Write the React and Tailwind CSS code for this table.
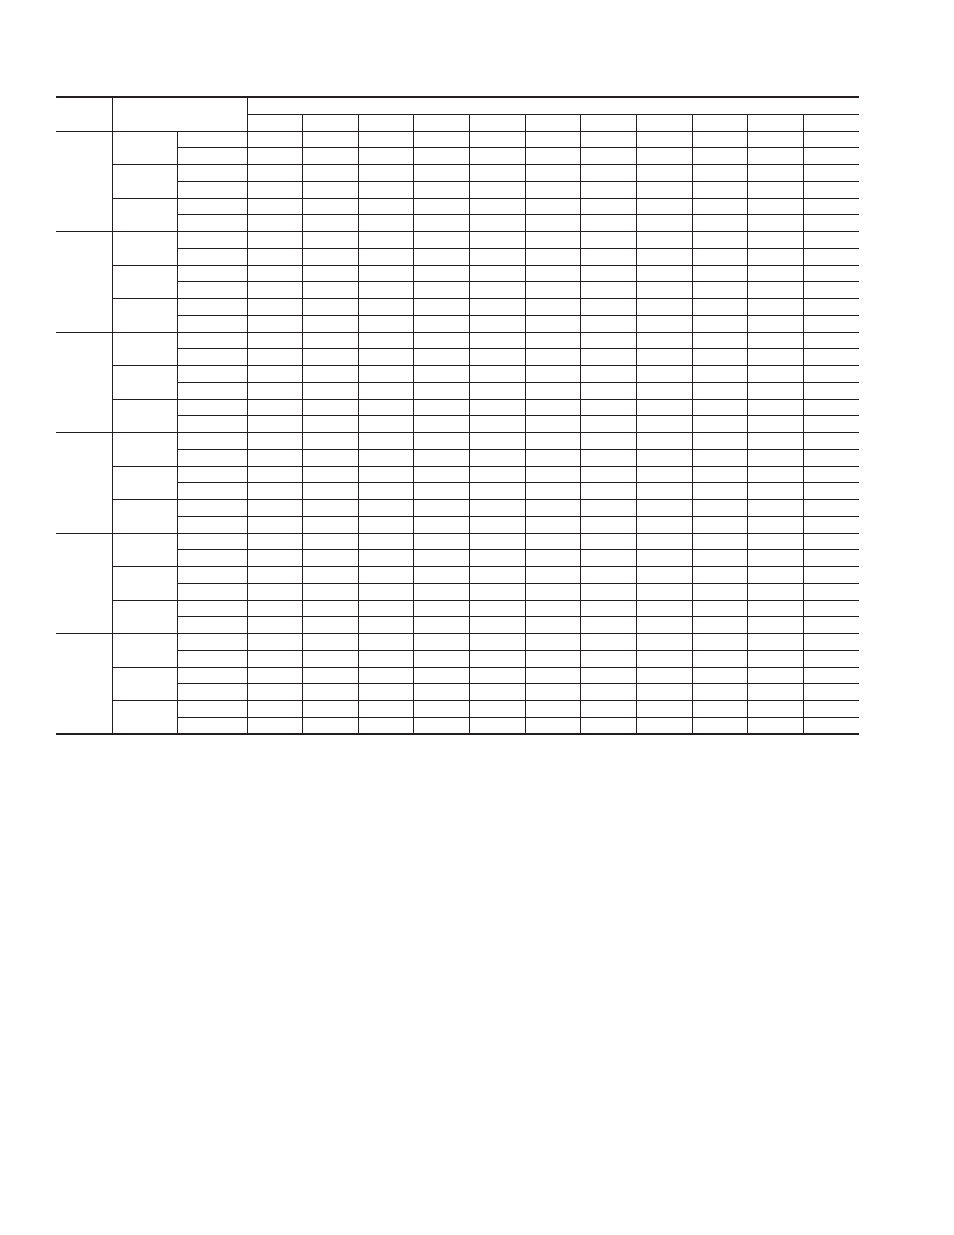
const line = 'border-[#231f20]'

function DataRow({ i }) {
  return (
    <tr className="h-[16.75px]">
      {i % 6 === 0 && <td rowSpan={6} className={`border-r border-b ${line}`} />}
      {i % 2 === 0 && <td rowSpan={2} className={`border-r border-b ${line}`} />}
      <td className={`border-r border-b ${line}`} />
      {Array.from({ length: 11 }).map((_, c) => (
        <td key={c} className={`border-b ${c < 10 ? 'border-r' : ''} ${line}`} />
      ))}
    </tr>
  )
}

export default function App() {
  const rows = Array.from({ length: 36 })
  return (
    <div className="min-h-[1235px] w-[954px] bg-white pt-[96px] pl-[56px] font-['Liberation_Sans',sans-serif]">
      <table className={`w-[803px] table-fixed border-collapse border-t-2 border-b-2 ${line}`}>
        <colgroup>
          <col className="w-[56px]" />
          <col className="w-[65px]" />
          <col className="w-[70px]" />
          {Array.from({ length: 11 }).map((_, c) => (
            <col key={c} />
          ))}
        </colgroup>
        <thead>
          <tr className="h-[17px]">
            <th rowSpan={2} className={`border-r border-b ${line}`} />
            <th colSpan={2} rowSpan={2} className={`border-r border-b ${line}`} />
            <th colSpan={11} className={`border-b ${line}`} />
          </tr>
          <tr className="h-[17px]">
            {Array.from({ length: 11 }).map((_, c) => (
              <th key={c} className={`border-b ${c < 10 ? 'border-r' : ''} ${line}`} />
            ))}
          </tr>
        </thead>
        <tbody>
          {rows.map((_, i) => (
            <DataRow key={i} i={i} />
          ))}
        </tbody>
      </table>
    </div>
  )
}
